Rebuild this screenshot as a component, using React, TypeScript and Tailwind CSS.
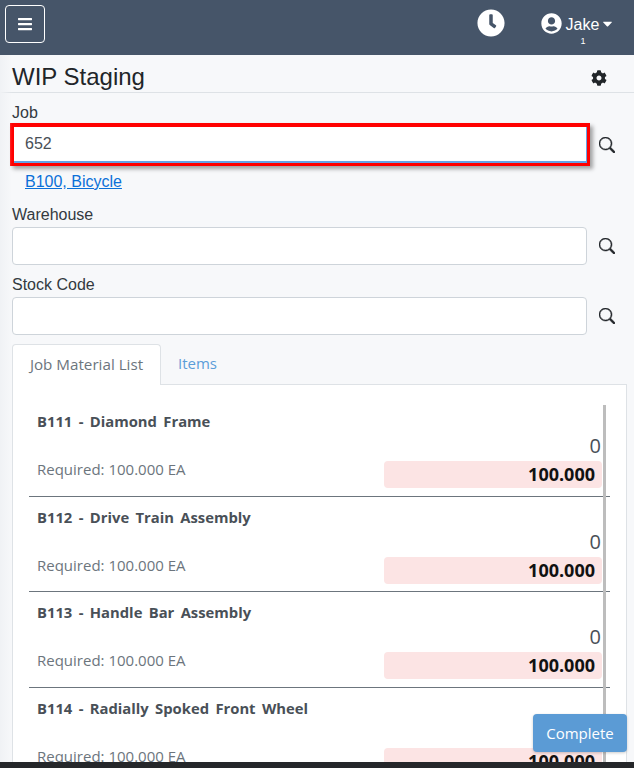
import { FaBars, FaClock, FaUserCircle, FaCog, FaCaretDown } from "react-icons/fa";
import { BsSearch } from "react-icons/bs";

const items = [
  "B111 - Diamond Frame",
  "B112 - Drive Train Assembly",
  "B113 - Handle Bar Assembly",
  "B114 - Radially Spoked Front Wheel",
];

function SearchIcon() {
  return (
    <div className="ml-[12px] w-[16px] flex items-center justify-center">
      <BsSearch className="text-[16px] text-[#212529] stroke-[0.5px]" />
    </div>
  );
}

function Field({ label, className }: { label: string; className?: string }) {
  return (
    <div className={className}>
      <div className="h-[21px] text-[16px] leading-[21px] text-[#333a40]">{label}</div>
      <div className="flex items-center h-[38px] mt-[2px]">
        <div className="w-[575px] h-[38px] bg-white border border-[#ced4da] rounded-[4px]" />
        <SearchIcon />
      </div>
    </div>
  );
}

function Row({ title, last }: { title: string; last?: boolean }) {
  return (
    <div className={`h-[95.5px] w-[581px] shrink-0 ${last ? "" : "border-b border-[#6c757d]"}`}>
      <div className="pl-[8px] pt-[10px] h-[35px] text-[14.8px] leading-[20px] [word-spacing:2.5px] font-bold text-[#495057] whitespace-nowrap">{title}</div>
      <div className="flex">
        <div className="w-[355px] pl-[8px] pt-[23px] text-[15px] leading-[20px] text-[#6c757d]">Required: 100.000 EA</div>
        <div className="w-[218px]">
          <div className="h-[20px] text-right text-[20px] leading-[20px] text-[#495057] pr-[1px]">0</div>
          <div className="h-[27px] mt-[5px] rounded-[4px] bg-[#fce4e4] text-right pr-[7px] text-[18px] leading-[27px] font-bold text-[#111]">100.000</div>
        </div>
      </div>
    </div>
  );
}

export default function App() {
  return (
    <div className="relative w-[634px] h-[768px] overflow-hidden bg-[#f7f8fa] flex flex-col font-['Liberation_Sans',Arial,sans-serif]">
      <header className="h-[55px] shrink-0 bg-[#465569] flex items-start pl-[5px] pt-[5px]">
        <button className="w-[40px] h-[38px] border border-white rounded-[4px] flex items-center justify-center text-white">
          <FaBars className="text-[16px]" />
        </button>
        <FaClock className="ml-[432px] mt-[4px] text-[28px] text-white" />
        <div className="ml-[36px] mt-[6px] flex flex-col items-center w-[74px] text-white">
          <div className="flex items-center h-[24px]">
            <FaUserCircle className="text-[21px]" />
            <span className="ml-[4px] mt-[3px] text-[16px]">Jake</span>
            <FaCaretDown className="ml-[1px] mt-[1px] text-[15px]" />
          </div>
          <div className="h-[9px] mt-[2px] ml-[10px] text-[9px] leading-[9px]">1</div>
        </div>
      </header>

      <div className="h-[38px] shrink-0 border-b border-[#dee2e6] flex items-center pl-[12px]">
        <h1 className="text-[24px] leading-[28px] text-[#212529] mt-[6px] flex-1">WIP Staging</h1>
        <FaCog className="text-[16px] text-[#212529] mr-[27px] mt-[9px]" />
      </div>

      <div className="pl-[12px] pt-[9px]">
        <div className="h-[21px] text-[16px] leading-[21px] text-[#333a40]">Job</div>
        <div className="flex items-center h-[43px]">
          <div className="w-[580px] h-[43px] -ml-[2px] -mr-[3px] border-[4px] border-r-[3px] border-b-[3px] border-[#ff0000] bg-white shadow-[3px_3px_4px_rgba(0,0,0,0.35)]">
            <div className="w-full h-full border-r border-b-2 border-[#63a4e8] pl-[11px] flex items-center text-[16px] text-[#495057]">652</div>
          </div>
          <SearchIcon />
        </div>
        <a className="block ml-[13px] mt-[6px] h-[20px] text-[16px] leading-[20px] text-[#0b70d8] underline">B100, Bicycle</a>
        <Field label="Warehouse" className="mt-[12px]" />
        <Field label="Stock Code" className="mt-[9px]" />
      </div>

      <div className="ml-[12px] mt-[9px] flex-1 min-h-0 flex flex-col font-['Open_Sans',sans-serif]">
        <div className="flex h-[41px] shrink-0 text-[15.2px] border-b border-[#dee2e6] mr-[7px]">
          <div className="w-[149px] h-[41px] pb-[2px] bg-white border border-b-0 border-[#dee2e6] rounded-t-[4px] flex items-center justify-center text-[#6c757d]">Job Material List</div>
          <div className="ml-[17px] pb-[2px] flex items-center text-[15px] text-[#5b9dd9] h-[40px]">Items</div>
        </div>
        <div className="relative flex-1 min-h-0 mr-[7px] bg-white border-l border-r border-[#dee2e6] pl-[16px] pt-[16px] flex flex-col overflow-hidden">
          <div className="absolute left-[590px] top-[20px] bottom-0 w-[3px] bg-[#bdbdbd]" />
          {items.map((t, i) => (
            <Row key={t} title={t} last={i === items.length - 1} />
          ))}
        </div>
      </div>

      <div className="h-[6px] shrink-0 bg-[#25272a] relative z-10" />
      <div className="absolute left-0 top-[55px] bottom-[6px] w-[12px] bg-gradient-to-r from-[#f0f2f5] to-transparent pointer-events-none" />
      <button className="absolute left-[533px] top-[714px] w-[94px] h-[38px] rounded-[4px] bg-[#5b9bd5] text-white text-[15px] font-['Open_Sans',sans-serif] shadow-[0_1px_3px_rgba(0,0,0,0.2)] z-20">Complete</button>
    </div>
  );
}
